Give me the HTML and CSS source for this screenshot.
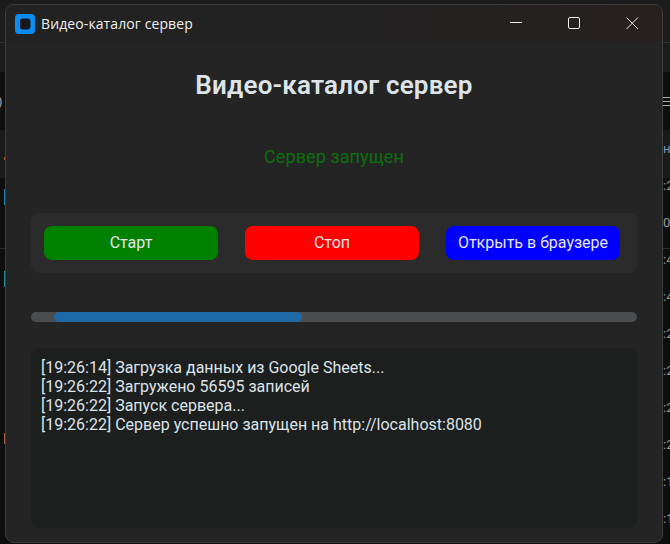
FILE: index.html
```html
<!DOCTYPE html>
<html lang="ru">
<head>
<meta charset="utf-8">
<title>Видео-каталог сервер</title>
<link rel="stylesheet" href="styles.css">
</head>
<body>
<div class="backdrop">
  <div class="back-top"></div>
  <div class="back-band"></div>
  <div class="back-rule"></div>
  <div class="back-rule-low"></div>
  <div class="mark mark-orange-dot"></div>
  <div class="mark mark-blue"></div>
  <div class="mark mark-teal"></div>
  <div class="mark mark-thin"></div>
  <div class="mark mark-orange"></div>
  <div class="mark mark-tan"></div>
  <div class="back-paren">)</div>
  <div class="back-times">
    <span class="back-first">н</span><span>:2</span><span>0(</span><span>:4</span><span>:4</span><span>:2</span><span>:2</span><span>:2</span><span>:2</span><span>:1</span><span>:1</span>
  </div>
  <div class="back-menu"></div>
</div>
<main class="window">
  <header class="titlebar">
    <svg class="app-icon" width="20" height="20" viewBox="0 0 20 20"><rect width="20" height="20" rx="4" fill="#0a8cf5"/><rect x="5" y="4.500" width="10.500" height="11" rx="3" fill="#15191e"/></svg>
    <span class="title-text">Видео-каталог сервер</span>
    <div class="controls">
      <svg class="ctl" width="13" height="13" viewBox="0 0 13 13"><path d="M0 5.500H12" stroke="#eee" stroke-width="1" fill="none"/></svg>
      <svg class="ctl" width="13" height="13" viewBox="0 0 13 13"><rect x="0.500" y="0.500" width="11" height="11" rx="1.500" stroke="#eee" stroke-width="1" fill="none"/></svg>
      <svg class="ctl" width="13" height="13" viewBox="0 0 13 13"><path d="M0.500 0.500L12 12M12 0.500L0.500 12" stroke="#eee" stroke-width="1" fill="none"/></svg>
    </div>
  </header>
  <section class="content">
    <h1 class="heading">Видео-каталог сервер</h1>
    <p class="status">Сервер запущен</p>
    <div class="panel">
      <button class="btn btn-green">Старт</button>
      <button class="btn btn-red">Стоп</button>
      <button class="btn btn-blue">Открыть в браузере</button>
    </div>
    <div class="progress"><div class="progress-fill"></div></div>
    <div class="log">
      <div>[19:26:14] Загрузка данных из Google Sheets...</div>
      <div>[19:26:22] Загружено 56595 записей</div>
      <div>[19:26:22] Запуск сервера...</div>
      <div>[19:26:22] Сервер успешно запущен на http://localhost:8080</div>
    </div>
  </section>
</main>
</body>
</html>
```
FILE: styles.css
```css
* { box-sizing: border-box; }
html, body { margin: 0; height: 100%; }
body {
  width: 670px;
  height: 544px;
  overflow: hidden;
  background: #0e0e0e;
  font-family: Roboto, "Noto Sans", sans-serif;
  position: relative;
}
.backdrop { position: absolute; inset: 0; overflow: hidden; }
.back-top { position: absolute; left: 0; top: 0; width: 670px; height: 72px; background: #1c1c1c; }
.back-band { position: absolute; left: 0; top: 130px; width: 670px; height: 48px; background: #1a1a1a; }
.back-rule { position: absolute; left: 0; top: 42px; width: 670px; height: 1px; background: #333; }
.back-rule-low { position: absolute; left: 0; top: 248px; width: 670px; height: 1px; background: #2c2c2c; }
.mark { position: absolute; left: 4px; width: 2px; }
.mark-orange-dot { top: 157px; height: 3px; background: #a5532a; }
.mark-blue { top: 189px; height: 16px; background: #1f7fb5; }
.mark-teal { top: 271px; height: 16px; background: #268a9e; }
.mark-thin { top: 398px; height: 10px; left: 5px; width: 1px; background: #2a6f99; }
.mark-orange { top: 433px; height: 11px; background: #a5603f; }
.mark-tan { top: 511px; height: 13px; left: 5px; width: 1px; background: #8f7f4f; }
.back-paren { position: absolute; left: -2px; top: 94px; color: #a8a8a8; font-size: 13px; }
.back-times {
  position: absolute;
  left: 663px;
  top: 140px;
  display: flex;
  flex-direction: column;
  gap: 19px;
  color: #9a9a9a;
  font-size: 13px;
  line-height: 18px;
}
.back-first { color: #7f93ad; }
.back-menu {
  position: absolute;
  left: 662px;
  top: 97px;
  width: 8px;
  height: 12px;
  background: repeating-linear-gradient(#b0b0b0 0 1px, transparent 1px 4px);
}
.window {
  position: absolute;
  left: 5px;
  top: 4px;
  width: 658px;
  height: 539px;
  background: #242424;
  border: 1px solid #3d3d3d;
  border-radius: 9px;
  overflow: hidden;
  display: flex;
  flex-direction: column;
}
.titlebar {
  height: 37px;
  flex: none;
  display: flex;
  align-items: center;
  padding-left: 9px;
  gap: 6px;
  background: linear-gradient(90deg, #222222, #222222 45%, #26211f);
}
.title-text {
  color: #f0f0f0;
  font-size: 14px;
  letter-spacing: 0.1px;
  font-family: "Open Sans", "Noto Sans", sans-serif;
}
.controls {
  margin-left: auto;
  display: flex;
  gap: 45px;
  padding-right: 23px;
  align-items: flex-start;
}
.content {
  flex: 1;
  padding: 0 25px 14px;
  display: flex;
  flex-direction: column;
}
.heading {
  margin: 27px 0 0;
  height: 32px;
  line-height: 32px;
  text-align: center;
  font-size: 26px;
  font-weight: 600;
  letter-spacing: 0.2px;
  color: #dce4ea;
}
.status {
  margin: 44px 0 0;
  height: 24px;
  line-height: 24px;
  text-align: center;
  font-size: 18px;
  letter-spacing: 0.1px;
  color: #0b700b;
}
.panel {
  margin-top: 44px;
  height: 60px;
  padding: 13px 17px 13px 13px;
  background: #2b2b2b;
  border-radius: 8px;
  display: flex;
  justify-content: space-between;
  flex: none;
}
.btn {
  width: 174px;
  height: 34px;
  border: 0;
  border-radius: 8px;
  color: #e6e6e6;
  font-family: inherit;
  font-size: 16px;
  padding: 0 0 1px;
}
.btn-green { background: #008000; }
.btn-red { background: #ff0000; }
.btn-blue { background: #0000ff; }
.progress {
  margin-top: 39px;
  height: 10px;
  border-radius: 5px;
  background: #4a4d50;
  padding-left: 23px;
  overflow: hidden;
  flex: none;
}
.progress-fill {
  width: 248px;
  height: 10px;
  border-radius: 5px;
  background: #1f6aa5;
}
.log {
  margin-top: 26px;
  flex: 1;
  padding: 10px;
  background: #1d1e1e;
  border-radius: 8px;
  color: #dce4ea;
  font-size: 16px;
  line-height: 19px;
}
```
